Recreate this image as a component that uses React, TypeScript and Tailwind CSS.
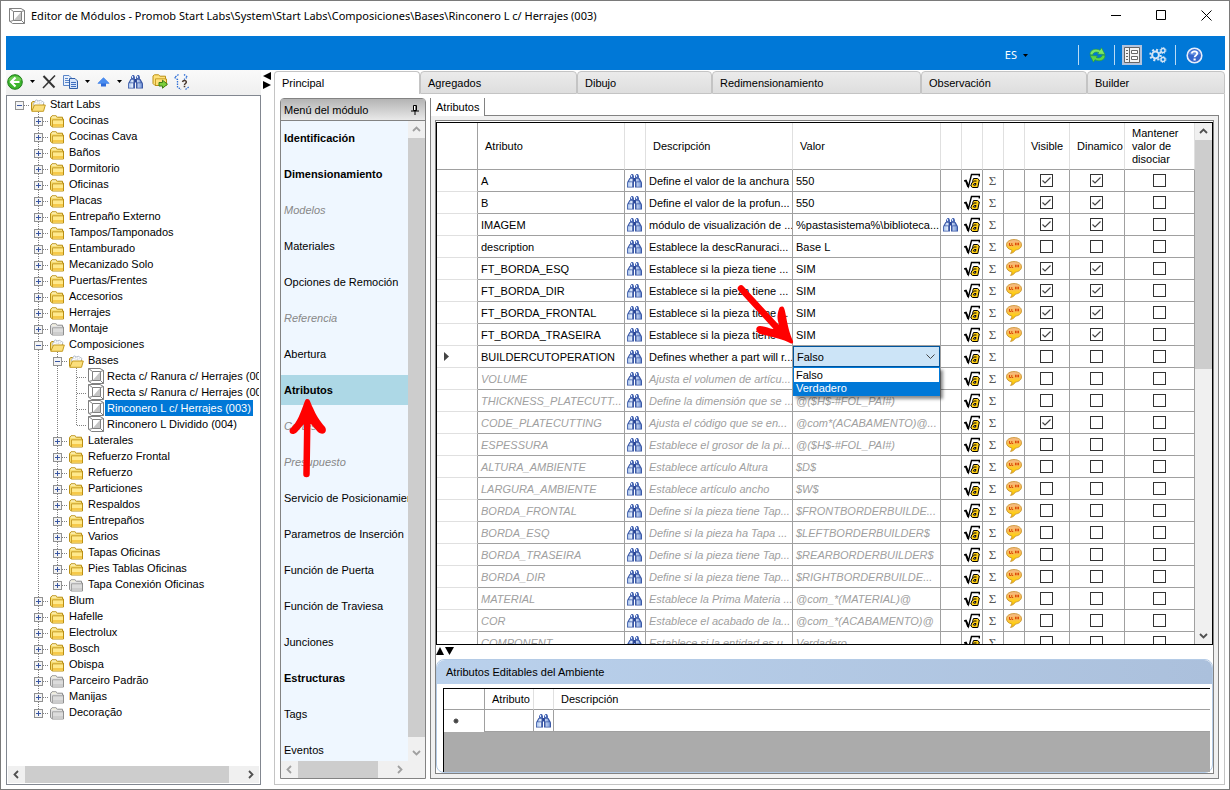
import { useState } from "react";

type Tone = "yellow" | "gray";
type TreeRow = { depth: number; label: string; kind: "open" | "closed" | "leaf"; tone?: Tone; last?: boolean; selected?: boolean };

const closed = (depth: number, label: string, tone: Tone = "yellow", last = false): TreeRow => ({ depth, label, kind: "closed", tone, last });

const tree: TreeRow[] = [
  { depth: 0, label: "Start Labs", kind: "open" },
  closed(1, "Cocinas"),
  closed(1, "Cocinas Cava"),
  closed(1, "Baños"),
  closed(1, "Dormitorio"),
  closed(1, "Oficinas"),
  closed(1, "Placas"),
  closed(1, "Entrepaño Externo"),
  closed(1, "Tampos/Tamponados"),
  closed(1, "Entamburado"),
  closed(1, "Mecanizado Solo"),
  closed(1, "Puertas/Frentes"),
  closed(1, "Accesorios"),
  closed(1, "Herrajes"),
  closed(1, "Montaje", "gray"),
  { depth: 1, label: "Composiciones", kind: "open" },
  { depth: 2, label: "Bases", kind: "open" },
  { depth: 3, label: "Recta c/ Ranura c/ Herrajes (001)", kind: "leaf" },
  { depth: 3, label: "Recta s/ Ranura c/ Herrajes (002)", kind: "leaf" },
  { depth: 3, label: "Rinconero L c/ Herrajes (003)", kind: "leaf", selected: true },
  { depth: 3, label: "Rinconero L Dividido (004)", kind: "leaf", last: true },
  closed(2, "Laterales"),
  closed(2, "Refuerzo Frontal"),
  closed(2, "Refuerzo"),
  closed(2, "Particiones"),
  closed(2, "Respaldos"),
  closed(2, "Entrepaños"),
  closed(2, "Varios"),
  closed(2, "Tapas Oficinas"),
  closed(2, "Pies Tablas Oficinas"),
  closed(2, "Tapa Conexión Oficinas", "gray", true),
  closed(1, "Blum"),
  closed(1, "Hafelle"),
  closed(1, "Electrolux"),
  closed(1, "Bosch"),
  closed(1, "Obispa"),
  closed(1, "Parceiro Padrão", "gray"),
  closed(1, "Manijas", "gray"),
  closed(1, "Decoração", "gray", true),
];

const menu: { label: string; style: "normal" | "bold" | "off" }[] = [
  { label: "Identificación", style: "bold" },
  { label: "Dimensionamiento", style: "bold" },
  { label: "Modelos", style: "off" },
  { label: "Materiales", style: "normal" },
  { label: "Opciones de Remoción", style: "normal" },
  { label: "Referencia", style: "off" },
  { label: "Abertura", style: "normal" },
  { label: "Atributos", style: "bold" },
  { label: "Cortes", style: "off" },
  { label: "Presupuesto", style: "off" },
  { label: "Servicio de Posicionamiento", style: "normal" },
  { label: "Parametros de Inserción", style: "normal" },
  { label: "Función de Puerta", style: "normal" },
  { label: "Función de Traviesa", style: "normal" },
  { label: "Junciones", style: "normal" },
  { label: "Estructuras", style: "bold" },
  { label: "Tags", style: "normal" },
  { label: "Eventos", style: "normal" },
];

type Attr = { name: string; desc: string; value: string; find?: boolean; note?: boolean; visible?: boolean; dynamic?: boolean; off?: boolean; combo?: boolean };

const attrs: Attr[] = [
  { name: "A", desc: "Define el valor de la anchura", value: "550", visible: true, dynamic: true },
  { name: "B", desc: "Define el valor de la profun...", value: "550", visible: true, dynamic: true },
  { name: "IMAGEM", desc: "módulo de visualización de ...", value: "%pastasistema%\\biblioteca...", find: true, visible: true, dynamic: true },
  { name: "description", desc: "Establece la descRanuraci...", value: "Base L", note: true },
  { name: "FT_BORDA_ESQ", desc: "Establece si la pieza tiene ...", value: "SIM", note: true, visible: true, dynamic: true },
  { name: "FT_BORDA_DIR", desc: "Establece si la pieza tiene ...", value: "SIM", note: true, visible: true, dynamic: true },
  { name: "FT_BORDA_FRONTAL", desc: "Establece si la pieza tiene ...", value: "SIM", note: true, visible: true, dynamic: true },
  { name: "FT_BORDA_TRASEIRA", desc: "Establece si la pieza tiene ...", value: "SIM", note: true, visible: true, dynamic: true },
  { name: "BUILDERCUTOPERATION", desc: "Defines whether a part will r...", value: "Falso", combo: true },
  { name: "VOLUME", desc: "Ajusta el volumen de artícu...", value: "", note: true, off: true },
  { name: "THICKNESS_PLATECUTT...", desc: "Define la dimensión que se ...", value: "@($H$-#FOL_PAI#)", off: true },
  { name: "CODE_PLATECUTTING", desc: "Ajusta el código que se en...", value: "@com*(ACABAMENTO)@...", visible: true, off: true },
  { name: "ESPESSURA", desc: "Establece el grosor de la pi...", value: "@($H$-#FOL_PAI#)", note: true, off: true },
  { name: "ALTURA_AMBIENTE", desc: "Establece artículo Altura", value: "$D$", note: true, off: true },
  { name: "LARGURA_AMBIENTE", desc: "Establece artículo ancho", value: "$W$", note: true, off: true },
  { name: "BORDA_FRONTAL", desc: "Define si la pieza tiene Tap...", value: "$FRONTBORDERBUILDE...", note: true, off: true },
  { name: "BORDA_ESQ", desc: "Define si la pieza ha Tapa ...", value: "$LEFTBORDERBUILDER$", note: true, off: true },
  { name: "BORDA_TRASEIRA", desc: "Define si la pieza tiene Tap...", value: "$REARBORDERBUILDER$", note: true, off: true },
  { name: "BORDA_DIR", desc: "Define si la pieza tiene Tap...", value: "$RIGHTBORDERBUILDE...", note: true, off: true },
  { name: "MATERIAL", desc: "Establece la Prima Materia ...", value: "@com_*(MATERIAL)@", note: true, off: true },
  { name: "COR", desc: "Establece el acabado de la...", value: "@com_*(ACABAMENTO)@", note: true, off: true },
  { name: "COMPONENT", desc: "Establece si la entidad es u...", value: "Verdadero", off: true },
];

/* ---------- icons ---------- */

function ModuleIcon() {
  return (
    <svg width="16" height="16" viewBox="0 0 16 16" aria-hidden="true">
      <path d="M.5 .5 H12 L15.500 2.500 V15.500 H3.500 L.5 13Z" fill="#fff" stroke="#808080" />
      <path d="M4.500 3.500 H12.500 V12.500 H4.500Z" fill="#fff" stroke="#808080" />
      <path d="M12 4 V12 H5Z" fill="#c4c4c4" />
      <path d="M.5 .5 L4.500 3.500 M12.500 3.500 L15.500 2.500 M.5 13.500 L4.500 12.500 M12.500 12.500 L15.500 15.500" stroke="#808080" />
    </svg>
  );
}

function FolderClosed({ tone }: { tone: Tone }) {
  const y = tone === "yellow";
  return (
    <svg width="15" height="13" viewBox="0 0 15 13" aria-hidden="true">
      <path d="M.5 10.500 V2.500 L2 .8 H6 L7.500 2.200 H12.500 V4 H13.500 V12 H2.500Z" fill={y ? "#f7dd74" : "#e2e2e2"} stroke={y ? "#b98f14" : "#8f8f8f"} />
      <path d="M3 5.500 H13 V11.500 H3Z" fill={y ? "#ffe98c" : "#dcdcdc"} />
      <path d="M3 9 H13 V11.500 H3Z" fill={y ? "#f6c94a" : "#cdcdcd"} />
      <path d="M2.500 12 V4.800 H13" fill="none" stroke={y ? "#c9a02a" : "#a2a2a2"} />
      <path d="M2 2 H6" stroke="#fffbe0" />
    </svg>
  );
}

function FolderOpen() {
  return (
    <svg width="15" height="13" viewBox="0 0 15 13" aria-hidden="true">
      <path d="M.5 11.500 V3.500 L2 2.500 H4.500 L6 4 H12.500 V7" fill="#f5dc88" stroke="#b98f14" />
      <path d="M2.500 5 L5 .8 L8 2 L9 1 L13 3.500 L11.500 7 H3Z" fill="#fff" stroke="#a9b4c4" strokeWidth=".8" />
      <path d="M4.500 3.500 L10 5 M6 2 L11 4" stroke="#a9b4c4" strokeWidth=".8" strokeDasharray="1 1" />
      <path d="M.8 12.300 L3.500 6 H14.300 L12.500 12.300Z" fill="#fbdf7c" stroke="#c49a20" />
    </svg>
  );
}

function Binoculars() {
  return (
    <svg width="15" height="14" viewBox="0 0 15 14" aria-hidden="true" className="block">
      <defs>
        <linearGradient id="barrel" x1="0" y1="0" x2="1" y2="0">
          <stop offset="0" stopColor="#a9c4ee" />
          <stop offset=".4" stopColor="#f8fbff" />
          <stop offset="1" stopColor="#7c9cda" />
        </linearGradient>
      </defs>
      <path d="M3 2 L4.500 0 H6 L7 2 V4 H3Z M8 2 L9.500 0 H11 L12 2 V4 H8Z" fill="#4a68b4" />
      <path d="M4.500 1 V3 M9.500 1 V3" stroke="#dce9fc" />
      <path d="M2.500 4 H7 V13.500 H0 V8.500Z" fill="#3a58a6" />
      <path d="M8 4 H12.500 L15 8.500 V13.500 H8Z" fill="#3a58a6" />
      <path d="M6.500 4 H8.500 V7.500 H6.500Z" fill="#2a4696" />
      <path d="M3.200 4.800 H5.500 V7.500 H1.800Z M9 4.800 H11.500 L13 7.500 H9Z" fill="url(#barrel)" />
      <path d="M.8 8.300 H5.200 V12.800 H.8Z M9.500 8.300 H13.800 V12.800 H9.500Z" fill="url(#barrel)" />
    </svg>
  );
}

function SqrtIcon() {
  return (
    <svg width="16" height="16" viewBox="0 0 16 16" aria-hidden="true" className="block">
      <path d="M0 8 L2 7.300 L4.500 13.500 L7.500 1.500 H15.300 V3.500" fill="none" stroke="#000" strokeWidth="1.400" />
      <path d="M1.800 7.500 L4.300 14" stroke="#000" strokeWidth="2" />
      <path d="M8.500 8.500 L9.500 5.500 H13.500 L15.300 7 L13.800 14.500 H8.500 L6.800 13 L7.800 9.800 L9.500 8.700Z" fill="#ffcf14" stroke="#000" />
      <path d="M10 8 H12.500 M9.500 12 L10.300 10.500 H12 L11.500 12.200Z" fill="#fff" stroke="#000" />
    </svg>
  );
}

function NoteIcon() {
  return (
    <svg width="16" height="15" viewBox="0 0 16 15" aria-hidden="true" className="block">
      <defs>
        <linearGradient id="note" x1="0" y1="0" x2="0" y2="1">
          <stop offset="0" stopColor="#f6b98a" />
          <stop offset=".4" stopColor="#f9bd55" />
          <stop offset=".7" stopColor="#ffd014" />
          <stop offset="1" stopColor="#f0b000" />
        </linearGradient>
      </defs>
      <path d="M8 .6 C12.500 .6 15.500 2.700 15.500 5.800 C15.500 9 12.500 10.800 9.500 11 C8.500 13 6.500 14.200 4.500 14.400 C5.500 13.300 6 12 5.700 10.900 C2.500 10.300 .5 8.500 .5 5.800 C.5 2.700 3.500 .6 8 .6Z" fill="url(#note)" stroke="#c9952f" strokeWidth=".9" />
      <path d="M3.500 4 V6.500 H5 M5.800 4 V6.500 H7.200" fill="none" stroke="#dc4a08" />
      <path d="M9 5 H10.600 M11.400 5 H13" stroke="#dc4a08" strokeWidth="2.400" />
    </svg>
  );
}

function Chevron({ dir, color = "#505050" }: { dir: "up" | "down" | "left" | "right"; color?: string }) {
  const d = { up: "M1 6 L4.500 2.500 L8 6", down: "M1 3 L4.500 6.500 L8 3", left: "M6 1 L2.500 4.500 L6 8", right: "M3 1 L6.500 4.500 L3 8" }[dir];
  return (
    <svg width="9" height="9" viewBox="0 0 9 9" aria-hidden="true">
      <path d={d} fill="none" stroke={color} strokeWidth="1.800" />
    </svg>
  );
}

function Caret() {
  return (
    <svg width="5" height="3" viewBox="0 0 5 3" aria-hidden="true">
      <path d="M0 0 H5 L2.500 3Z" fill="#000" />
    </svg>
  );
}

/* ---------- building blocks ---------- */

function ScrollButton({ dir, faded, label }: { dir: "up" | "down" | "left" | "right"; faded?: boolean; label: string }) {
  return (
    <button type="button" aria-label={label} className="flex size-[17px] shrink-0 items-center justify-center bg-[#f0f0f0]">
      <Chevron dir={dir} color={faded ? "#a0a0a0" : "#505050"} />
    </button>
  );
}

function TreeCell({ kind, last }: { kind: "blank" | "guide" | "elbow" | "open" | "closed" | "root"; last?: boolean }) {
  const box = kind === "open" || kind === "closed" || kind === "root";
  return (
    <svg width="19" height="16" viewBox="0 0 19 16" className="shrink-0" aria-hidden="true" shapeRendering="crispEdges">
      {kind !== "blank" && kind !== "root" && <path d={last ? "M9.500 0 V10" : "M9.500 0 V16"} stroke="#808080" strokeDasharray="1 1" />}
      {kind !== "blank" && kind !== "guide" && <path d="M10 9.500 H19" stroke="#808080" strokeDasharray="1 1" />}
      {box && (
        <>
          <rect x="5.500" y="5.500" width="8" height="8" fill="#f4f4f4" stroke="#919191" />
          <path d="M7 9.500 H12" stroke="#3a57a3" />
          {kind === "closed" && <path d="M9.500 7 V12" stroke="#3a57a3" />}
        </>
      )}
    </svg>
  );
}

function TreeLine({ row }: { row: TreeRow }) {
  return (
    <li role="treeitem" aria-selected={!!row.selected} className="flex h-4 items-stretch whitespace-nowrap pl-[3px]">
      {Array.from({ length: row.depth }, (_, i) => (
        <TreeCell key={i} kind={i === 0 ? "blank" : "guide"} />
      ))}
      <TreeCell kind={row.kind === "leaf" ? "elbow" : row.depth === 0 ? "root" : row.kind} last={row.last} />
      <span className="flex w-[19px] shrink-0 items-end justify-center">
        {row.kind === "leaf" ? <ModuleIcon /> : row.kind === "open" ? <FolderOpen /> : <FolderClosed tone={row.tone ?? "yellow"} />}
      </span>
      <span className={row.selected ? "bg-[#0078d7] px-0.5 text-white" : "px-0.5"}>{row.label}</span>
    </li>
  );
}

function Check({ on, label }: { on?: boolean; label: string }) {
  const [value, setValue] = useState(!!on);
  return (
    <label className="mx-auto grid size-[13px] place-items-center">
      <input
        type="checkbox"
        aria-label={label}
        checked={value}
        onChange={() => setValue(!value)}
        className="col-start-1 row-start-1 size-[13px] appearance-none border border-[#333] bg-white"
      />
      {value && (
        <svg width="11" height="11" viewBox="0 0 11 11" className="pointer-events-none col-start-1 row-start-1" aria-hidden="true">
          <path d="M1.500 5.500 L4 8 L9.500 2.500" fill="none" stroke="#444" strokeWidth="1.200" />
        </svg>
      )}
    </label>
  );
}

function ValueCombo() {
  return (
    <div className="relative z-10 h-[21px]">
      <select aria-label="Valor de BUILDERCUTOPERATION" defaultValue="Falso" className="block h-[21px] w-full appearance-none border border-[#00549c] bg-[#cce4f7] px-[3px] outline-none">
        <option>Falso</option>
        <option>Verdadero</option>
      </select>
      <svg width="9" height="6" viewBox="0 0 9 6" className="pointer-events-none absolute right-[5px] top-2" aria-hidden="true">
        <path d="M.5 .5 L4.500 4.500 L8.500 .5" fill="none" stroke="#444" />
      </svg>
      <ul role="listbox" aria-label="Opciones" className="absolute left-0 top-[21px] w-full border border-[#0078d7] bg-white pt-px leading-[13px] shadow-[3px_3px_3px_rgba(0,0,0,0.45)]">
        <li role="option" aria-selected="false" className="px-0.5">Falso</li>
        <li role="option" aria-selected="true" className="bg-[#0078d7] px-0.5 text-white">Verdadero</li>
      </ul>
      <svg width="58" height="64" viewBox="0 0 58 64" className="pointer-events-none absolute -left-14 -top-[62px]" aria-hidden="true">
        <path d="M4 4.500 L42 46" stroke="#f00" strokeWidth="6.500" strokeLinecap="round" />
        <path d="M47 24 C49 28 50 44 56 57 C56.500 60 55 60 53 59 C46 55 36 53 23 50 C18 48 18 42 23 42 C27 42 32 44 36 45 L42 40 C40 36 40 30 42 25 C43 22 46 22 47 24Z" fill="#f00" />
      </svg>
    </div>
  );
}

const th = "border-b border-r border-b-[#a0a0a0] border-r-[#e0e0e0] px-[7px] text-left font-normal";
const td = "overflow-hidden whitespace-nowrap border-b border-r border-[#a0a0a0] p-0";

function IconButton({ label, children }: { label: string; children: React.ReactNode }) {
  return (
    <button type="button" aria-label={label} className="flex w-full items-center justify-center pr-px">
      {children}
    </button>
  );
}

function AttributeTable() {
  return (
    <table className="w-full table-fixed border-separate border-spacing-0">
      <colgroup>
        <col className="w-[41px]" />
        <col className="w-[147px]" />
        <col className="w-[21px]" />
        <col className="w-[147px]" />
        <col />
        <col className="w-[21px]" />
        <col className="w-[21px]" />
        <col className="w-[21px]" />
        <col className="w-[21px]" />
        <col className="w-[45px]" />
        <col className="w-[55px]" />
        <col className="w-[70px]" />
      </colgroup>
      <thead>
        <tr className="h-[47px]">
          <td className="border-b border-r border-[#a0a0a0] p-0" />
          <th className={th}>Atributo</th>
          <td className={th} />
          <th className={th}>Descripción</th>
          <th className={th}>Valor</th>
          <td className={th} />
          <td className={th} />
          <td className={th} />
          <td className={th} />
          <th className="border-b border-r border-b-[#a0a0a0] border-r-[#e0e0e0] p-0 text-center font-normal">Visible</th>
          <th className="border-b border-r border-b-[#a0a0a0] border-r-[#e0e0e0] p-0 pl-[7px] text-left font-normal">Dinamico</th>
          <th className="border-b border-r border-b-[#a0a0a0] border-r-[#e0e0e0] py-0 pl-[7px] pr-1 text-left font-normal leading-[13px]">Mantener valor de disociar</th>
        </tr>
      </thead>
      <tbody>
        {attrs.map((a) => (
          <tr key={a.name} className={a.off ? "h-[22px] italic text-[#a0a0a0]" : "h-[22px]"}>
            <td className="border-b border-r border-b-[#e0e0e0] border-r-[#a0a0a0] p-0 pl-[7px]">
              {a.combo && (
                <svg width="5" height="9" viewBox="0 0 5 9" aria-hidden="true">
                  <path d="M0 0 L5 4.500 L0 9Z" fill="#444" />
                </svg>
              )}
            </td>
            <td className={td + " pl-[3px]"}>{a.name}</td>
            <td className={td}>
              <IconButton label={"Buscar " + a.name}><Binoculars /></IconButton>
            </td>
            <td className={td + " pl-[3px]"}>{a.desc}</td>
            {a.combo ? (
              <td className="border-b border-r border-[#a0a0a0] p-0"><ValueCombo /></td>
            ) : (
              <td className={td + " pl-[3px]"}>{a.value}</td>
            )}
            <td className={td}>{a.find && <IconButton label="Buscar archivo"><Binoculars /></IconButton>}</td>
            <td className={td}>
              <IconButton label={"Fórmula de " + a.name}><SqrtIcon /></IconButton>
            </td>
            <td className={td}>
              <IconButton label={"Suma de " + a.name}>
                <span className="font-['Liberation_Serif',serif] text-[13px] not-italic leading-4 text-[#555]">Σ</span>
              </IconButton>
            </td>
            <td className={td}>{a.note && <IconButton label={"Nota de " + a.name}><NoteIcon /></IconButton>}</td>
            <td className={td + " pr-px"}><Check on={a.visible} label={a.name + " visible"} /></td>
            <td className={td + " pr-px"}><Check on={a.dynamic} label={a.name + " dinámico"} /></td>
            <td className={td}><Check label={a.name + " mantener valor"} /></td>
          </tr>
        ))}
      </tbody>
    </table>
  );
}

function TitleBar() {
  return (
    <header className="flex h-[35px] shrink-0 items-center pl-2 pr-[17px]">
      <div className="flex flex-1 items-center gap-1.5 pb-1.5">
        <ModuleIcon />
        <h1 className="font-['Noto_Sans',sans-serif] text-[11px] leading-4">
          Editor de Módulos - Promob Start Labs\System\Start Labs\Composiciones\Bases\Rinconero L c/ Herrajes (003)
        </h1>
      </div>
      <div className="flex items-center gap-[34px] pb-1.5">
        <button type="button" aria-label="Minimizar">
          <svg width="11" height="11" viewBox="0 0 11 11" className="block"><path d="M0 5.500 H10" stroke="#000" /></svg>
        </button>
        <button type="button" aria-label="Maximizar">
          <svg width="11" height="11" viewBox="0 0 11 11" className="block"><path d="M.5 .5 H9.500 V9.500 H.5Z" fill="none" stroke="#000" /></svg>
        </button>
        <button type="button" aria-label="Cerrar">
          <svg width="11" height="11" viewBox="0 0 11 11" className="block"><path d="M.5 .5 L10.500 10.500 M10.500 .5 L.5 10.500" stroke="#000" /></svg>
        </button>
      </div>
    </header>
  );
}

function Ribbon() {
  return (
    <div className="flex h-[34px] shrink-0 items-center justify-end bg-[#0078d7] pr-[22px] pt-1">
      <button type="button" className="mr-[50px] flex items-center gap-1.5 font-['Noto_Sans',sans-serif] text-white">ES <Caret /></button>
      <span className="mr-[10px] h-5 w-px bg-[#b9dbf5]" />
      <button type="button" aria-label="Actualizar" className="mr-2">
        <svg width="17" height="16" viewBox="0 0 17 16" className="block">
          <path d="M1 7.500 C1 2.500 7 1 11 3.300 L12.500 .8 L16 7.500 L8.500 7 L10 5.600 C7 4.500 4.500 5 3.500 8Z" fill="#7be866" stroke="#2a9a34" strokeWidth=".6" />
          <path d="M16 8.500 C16 13.500 10 15 6 12.700 L4.500 15.200 L1 8.500 L8.500 9 L7 10.400 C10 11.500 12.500 11 13.500 8Z" fill="#5cd648" stroke="#2a9a34" strokeWidth=".6" />
        </svg>
      </button>
      <span className="mr-[7px] h-5 w-px bg-[#b9dbf5]" />
      <button type="button" aria-label="Propiedades" className="mr-[7px] flex size-5 items-center justify-center bg-[#b3c3dc]">
        <svg width="16" height="16" viewBox="0 0 16 16" className="block">
          <path d="M.5 .5 H15.500 V15.500 H.5Z" fill="#f4f4f4" stroke="#666" />
          <path d="M5.500 1 V15" stroke="#666" />
          <path d="M2 3.500 H4 M2 6.500 H4 M2 9.500 H4 M2 12.500 H4" stroke="#666" />
          <path d="M7.500 3.500 H13.500 V6.500 H7.500Z M7.500 9.500 H13.500 V12.500 H7.500Z" fill="#fff" stroke="#666" />
        </svg>
      </button>
      <button type="button" aria-label="Configuración" className="mr-2">
        <svg width="18" height="16" viewBox="0 0 18 16" className="block">
          <circle cx="6.500" cy="8" r="3.400" fill="none" stroke="#d7e6f5" strokeWidth="2" />
          <circle cx="6.500" cy="8" r="5.200" fill="none" stroke="#d7e6f5" strokeWidth="2" strokeDasharray="2 2.080" />
          <circle cx="14" cy="3.500" r="2" fill="none" stroke="#d7e6f5" strokeWidth="1.400" />
          <circle cx="14" cy="3.500" r="3" fill="none" stroke="#d7e6f5" strokeDasharray="1.200 1.150" />
          <circle cx="14" cy="12.500" r="2" fill="none" stroke="#d7e6f5" strokeWidth="1.400" />
          <circle cx="14" cy="12.500" r="3" fill="none" stroke="#d7e6f5" strokeDasharray="1.200 1.150" />
        </svg>
      </button>
      <span className="mr-[10px] h-5 w-px bg-[#b9dbf5]" />
      <button type="button" aria-label="Ayuda">
        <svg width="17" height="17" viewBox="0 0 17 17" className="block">
          <circle cx="8.500" cy="8.500" r="7.300" fill="#3566cc" stroke="#e8eefb" strokeWidth="1.600" />
          <path d="M3 7 C4 2 13 2 14 7 C11 8.500 6 8.500 3 7Z" fill="#7ea6ee" opacity=".6" />
          <path d="M5.800 6.600 C5.800 3.500 11.200 3.500 11.200 6.600 C11.200 8.400 8.600 8.400 8.600 10.200" fill="none" stroke="#fff" strokeWidth="1.800" />
          <path d="M7.500 11.500 H9.700 V13.500 H7.500Z" fill="#fff" />
        </svg>
      </button>
    </div>
  );
}

function TreeToolbar() {
  return (
    <div className="flex h-[25px] shrink-0 items-center bg-gradient-to-b from-[#fafafa] to-[#efefef] pb-0.5 pl-px">
      <button type="button" aria-label="Atrás" className="mr-[7px]">
        <svg width="16" height="16" viewBox="0 0 16 16" className="block">
          <circle cx="8" cy="8" r="7.300" fill="#3cb52c" stroke="#1f7d1a" />
          <path d="M1.500 6 C3 1 13 1 14.500 6 C11 8 5 8 1.500 6Z" fill="#8ade6c" opacity=".6" />
          <path d="M8.500 3.500 L4 8 L8.500 12.500 M4.500 8 H12.500" fill="none" stroke="#fff" strokeWidth="2.200" />
        </svg>
      </button>
      <span className="mr-[7px] flex"><Caret /></span>
      <button type="button" aria-label="Eliminar" className="mr-[7px]">
        <svg width="14" height="14" viewBox="0 0 14 14" className="block">
          <path d="M1.500 1 L12.500 12.500" stroke="#333" strokeWidth="2" />
          <path d="M13 .5 L1 13" stroke="#333" strokeWidth="1.500" />
        </svg>
      </button>
      <button type="button" aria-label="Copiar" className="mr-[7px]">
        <svg width="15" height="14" viewBox="0 0 15 14" className="block">
          <path d="M.5 .5 H6 L8.500 3 V10.500 H.5Z" fill="#e9f1fd" stroke="#5b86c8" />
          <path d="M2 3.500 H5 M2 5.500 H6 M2 7.500 H6" stroke="#5b86c8" />
          <path d="M6.500 3.500 H12 L14.500 6 V13.500 H6.500Z" fill="#d4e3fa" stroke="#2f5ea8" />
          <path d="M8 7.500 H13 M8 9.500 H13 M8 11.500 H13" stroke="#3f6fc0" />
        </svg>
      </button>
      <span className="mr-[7px] flex"><Caret /></span>
      <button type="button" aria-label="Subir" className="mr-[7px]">
        <svg width="13" height="10" viewBox="0 0 13 10" className="block">
          <path d="M6.500 .5 L12.500 6.500 H9 V9.500 H4 V6.500 H.5Z" fill="#2f6bd8" />
          <path d="M6.500 .5 L12.500 6.500 H.5Z" fill="#4a8df0" />
        </svg>
      </button>
      <span className="mr-1.5 flex"><Caret /></span>
      <button type="button" aria-label="Buscar" className="mr-[9px]"><Binoculars /></button>
      <button type="button" aria-label="Mover a carpeta" className="mr-1.5">
        <svg width="16" height="15" viewBox="0 0 16 15" className="block">
          <path d="M1 9.500 V2 L2.500 .8 H6.500 L8 2.200 H13.500 V5 H14.500 V11.500 H3Z" fill="#ffe17a" stroke="#b98f14" />
          <path d="M3.500 11 V4.800 H14" fill="none" stroke="#c9a02a" />
          <path d="M7 8.500 H10.500 V6.200 L15.500 10.200 L10.500 14.200 V12 H7Z" fill="#7ccf3c" stroke="#3f7d18" />
        </svg>
      </button>
      <button type="button" aria-label="Reordenar estructura">
        <svg width="17" height="16" viewBox="0 0 17 16" className="block">
          <path d="M4.500 .5 L.5 3.500 L3.500 5.500 V13 L7 15.500 M10 .5 L13.500 3 L10 5.500 M11.500 15.500 L15.500 12.500" fill="none" stroke="#2f6fd6" strokeWidth="1.300" strokeDasharray="1.500 1" />
          <path d="M8.500 8 C9 5.800 12.500 6 12.300 8.200 C12.200 9.500 10.500 9.500 10.500 11 M9.700 12.500 H11.300" fill="none" stroke="#4a3a30" strokeWidth="1.500" />
        </svg>
      </button>
    </div>
  );
}

function ModuleMenu() {
  return (
    <nav aria-label="Menú del módulo" className="flex w-[146px] shrink-0 flex-col rounded-t-sm border border-[#838383]">
      <div className="flex h-[22px] shrink-0 items-center justify-between border-b border-[#838383] bg-gradient-to-b from-[#b4b4b4] to-[#e9e9e9] pl-[3px] pr-1.5">
        <h2>Menú del módulo</h2>
        <button type="button" aria-label="Fijar">
          <svg width="8" height="10" viewBox="0 0 8 10" className="block">
            <path d="M2.500 .5 H5.500 V5.500 H2.500Z" fill="#fff" stroke="#000" />
            <path d="M5 1 V5 M0 6 H8 M4 6 V10" stroke="#000" />
          </svg>
        </button>
      </div>
      <div className="flex min-h-0 flex-1">
        <div className="flex min-w-0 flex-1 flex-col">
          <ul className="min-h-0 flex-1 overflow-hidden bg-[#eff7ff] pt-0.5">
            {menu.map((m) => (
              <li key={m.label} className={m.label === "Atributos" ? "relative mb-1.5 bg-[#add8e6]" : "mb-1.5"}>
                <button
                  type="button"
                  className={
                    m.style === "bold"
                      ? "block h-[30px] w-full overflow-hidden whitespace-nowrap pl-[3px] text-left font-bold"
                      : m.style === "off"
                        ? "block h-[30px] w-full overflow-hidden whitespace-nowrap pl-[3px] text-left italic text-[#888]"
                        : "block h-[30px] w-full overflow-hidden whitespace-nowrap pl-[3px] text-left"
                  }
                >
                  {m.label}
                </button>
                {m.label === "Atributos" && (
                  <svg width="40" height="80" viewBox="0 0 40 80" className="pointer-events-none absolute left-[7px] top-[23px]" aria-hidden="true">
                    <path d="M19.500 12 L18.500 76" stroke="#f00" strokeWidth="6.500" strokeLinecap="round" />
                    <path d="M19.500 1 C22 1 22 4 25 10 C28 17 31 22 37 29 C40 34 35 38 30 34 L23 26 H16 L9 34 C4 39 -1 34 3 30 C9 25 13 14 16.500 4 C17.500 1.500 18 1 19.500 1Z" fill="#f00" />
                  </svg>
                )}
              </li>
            ))}
          </ul>
          <div className="flex h-[17px] shrink-0 bg-[#f0f0f0]">
            <ScrollButton dir="left" faded label="Desplazar menú a la izquierda" />
            <div className="flex-1"><div className="h-full w-[86%] bg-[#cdcdcd]" /></div>
            <ScrollButton dir="right" faded label="Desplazar menú a la derecha" />
          </div>
        </div>
        <div className="flex w-[17px] shrink-0 flex-col bg-[#f0f0f0] pb-[17px]">
          <ScrollButton dir="up" faded label="Desplazar menú hacia arriba" />
          <div className="flex-1 pb-[7px]"><div className="h-full bg-[#cdcdcd]" /></div>
          <ScrollButton dir="down" faded label="Desplazar menú hacia abajo" />
        </div>
      </div>
    </nav>
  );
}

function EditablePanel() {
  return (
    <section className="flex h-[114px] shrink-0 flex-col rounded-lg border border-[#b4cbe6] bg-white">
      <h2 className="h-6 shrink-0 rounded-t-lg bg-gradient-to-r from-[#bad1ec] to-[#abc0dc] pl-[9px] leading-6">Atributos Editables del Ambiente</h2>
      <div className="ml-1.5 mr-0.5 mt-1 min-h-0 flex-1 border-l border-t border-black bg-[#ababab]">
        <table className="w-full table-fixed border-separate border-spacing-0 bg-white">
          <colgroup>
            <col className="w-[41px]" />
            <col className="w-[49px]" />
            <col className="w-5" />
            <col />
          </colgroup>
          <thead>
            <tr className="h-[21px]">
              <td className="border-b border-r border-[#a0a0a0] p-0" />
              <th className="border-b border-r border-b-[#a0a0a0] border-r-[#e0e0e0] p-0 pl-[7px] text-left font-normal">Atributo</th>
              <td className="border-b border-r border-b-[#a0a0a0] border-r-[#e0e0e0] p-0" />
              <th className="border-b border-[#a0a0a0] p-0 pl-[7px] text-left font-normal">Descripción</th>
            </tr>
          </thead>
          <tbody>
            <tr className="h-[22px]">
              <td className="border-r border-[#a0a0a0] p-0 pl-[9px]">
                <svg width="6" height="6" viewBox="0 0 6 6" aria-hidden="true">
                  <circle cx="3" cy="3" r="2" fill="#444" />
                  <path d="M3 0 V6 M0 3 H6 M1 1 L5 5 M5 1 L1 5" stroke="#444" strokeWidth=".7" />
                </svg>
              </td>
              <td className="border-b border-r border-[#a0a0a0] p-0" />
              <td className="border-b border-r border-[#a0a0a0] p-0"><IconButton label="Buscar atributo"><Binoculars /></IconButton></td>
              <td className="border-b border-[#a0a0a0] p-0" />
            </tr>
          </tbody>
        </table>
      </div>
    </section>
  );
}

const tab = "h-[23px] rounded-t border border-[#c4c4c4] bg-gradient-to-b from-[#ebebeb] to-[#dedede] pl-[7px] text-left";

export default function App() {
  return (
    <div className="flex h-screen flex-col overflow-hidden border border-[#7a7a7a] bg-white pb-1 font-['Liberation_Sans',Arial,sans-serif] text-[11px] leading-4 text-black">
      <TitleBar />
      <div className="flex min-h-0 flex-1 flex-col pl-[5px] pr-1">
        <Ribbon />
        <div className="flex min-h-0 flex-1">
          <aside className="flex w-[255px] shrink-0 flex-col">
            <TreeToolbar />
            <div className="flex min-h-0 flex-1 flex-col border border-[#828790] p-px pt-0">
              <ul role="tree" aria-label="Biblioteca" className="-ml-px min-h-0 flex-1 overflow-hidden">
                {tree.map((row) => (
                  <TreeLine key={row.label} row={row} />
                ))}
              </ul>
              <div className="flex h-[17px] shrink-0 bg-[#f0f0f0]">
                <ScrollButton dir="left" label="Desplazar árbol a la izquierda" />
                <div className="flex-1"><div className="h-full w-[94%] bg-[#cdcdcd]" /></div>
                <ScrollButton dir="right" label="Desplazar árbol a la derecha" />
              </div>
            </div>
          </aside>
          <div className="w-[13px] shrink-0 pl-[2px] pt-0.5">
            <svg width="8" height="17" viewBox="0 0 8 17" aria-hidden="true">
              <path d="M8 0 V8 L0 4Z M0 9 V17 L8 13Z" fill="#000" />
            </svg>
          </div>
          <main className="flex min-w-0 flex-1 flex-col">
            <div role="tablist" className="flex shrink-0 pt-px">
              <button type="button" role="tab" aria-selected="true" className="h-[23px] w-[146px] rounded-t border-x border-t border-[#c4c4c4] bg-white pl-[7px] text-left">Principal</button>
              <button type="button" role="tab" className={tab + " w-[157px]"}>Agregados</button>
              <button type="button" role="tab" className={tab + " w-[135px]"}>Dibujo</button>
              <button type="button" role="tab" className={tab + " w-[209px]"}>Redimensionamiento</button>
              <button type="button" role="tab" className={tab + " w-[166px]"}>Observación</button>
              <button type="button" role="tab" className={tab + " flex-1"}>Builder</button>
            </div>
            <div className="flex min-h-0 flex-1 gap-1 border-x border-b border-[#c4c4c4] px-[5px] pb-[5px] pt-1">
              <ModuleMenu />
              <div className="flex min-w-0 flex-1 flex-col">
                <div role="tablist" className="flex h-[18px] shrink-0">
                  <button type="button" role="tab" aria-selected="true" className="border-x border-[#828282] px-[5px]">Atributos</button>
                  <span className="flex-1 border-b border-[#828282]" />
                </div>
                <div className="flex min-h-0 flex-1 flex-col border-x border-b border-[#828282] bg-[#f0f0f0] p-1">
                  <div className="flex min-h-0 flex-1 flex-col border border-[#828282] bg-white pt-px">
                    <div className="flex min-h-0 flex-1 border border-black">
                      <div className="min-w-0 flex-1 overflow-hidden">
                        <AttributeTable />
                      </div>
                      <div className="flex w-[17px] shrink-0 flex-col bg-[#f0f0f0]">
                        <ScrollButton dir="up" label="Desplazar tabla hacia arriba" />
                        <div className="flex-1"><div className="h-[47%] bg-[#cdcdcd]" /></div>
                        <ScrollButton dir="down" label="Desplazar tabla hacia abajo" />
                      </div>
                    </div>
                    <div className="h-[14px] shrink-0 pt-0.5">
                      <svg width="18" height="8" viewBox="0 0 18 8" className="block" aria-hidden="true">
                        <path d="M0 8 H8 L4 0Z M9 0 H18 L13.500 8Z" fill="#000" />
                      </svg>
                    </div>
                    <EditablePanel />
                  </div>
                </div>
              </div>
            </div>
          </main>
        </div>
      </div>
    </div>
  );
}
